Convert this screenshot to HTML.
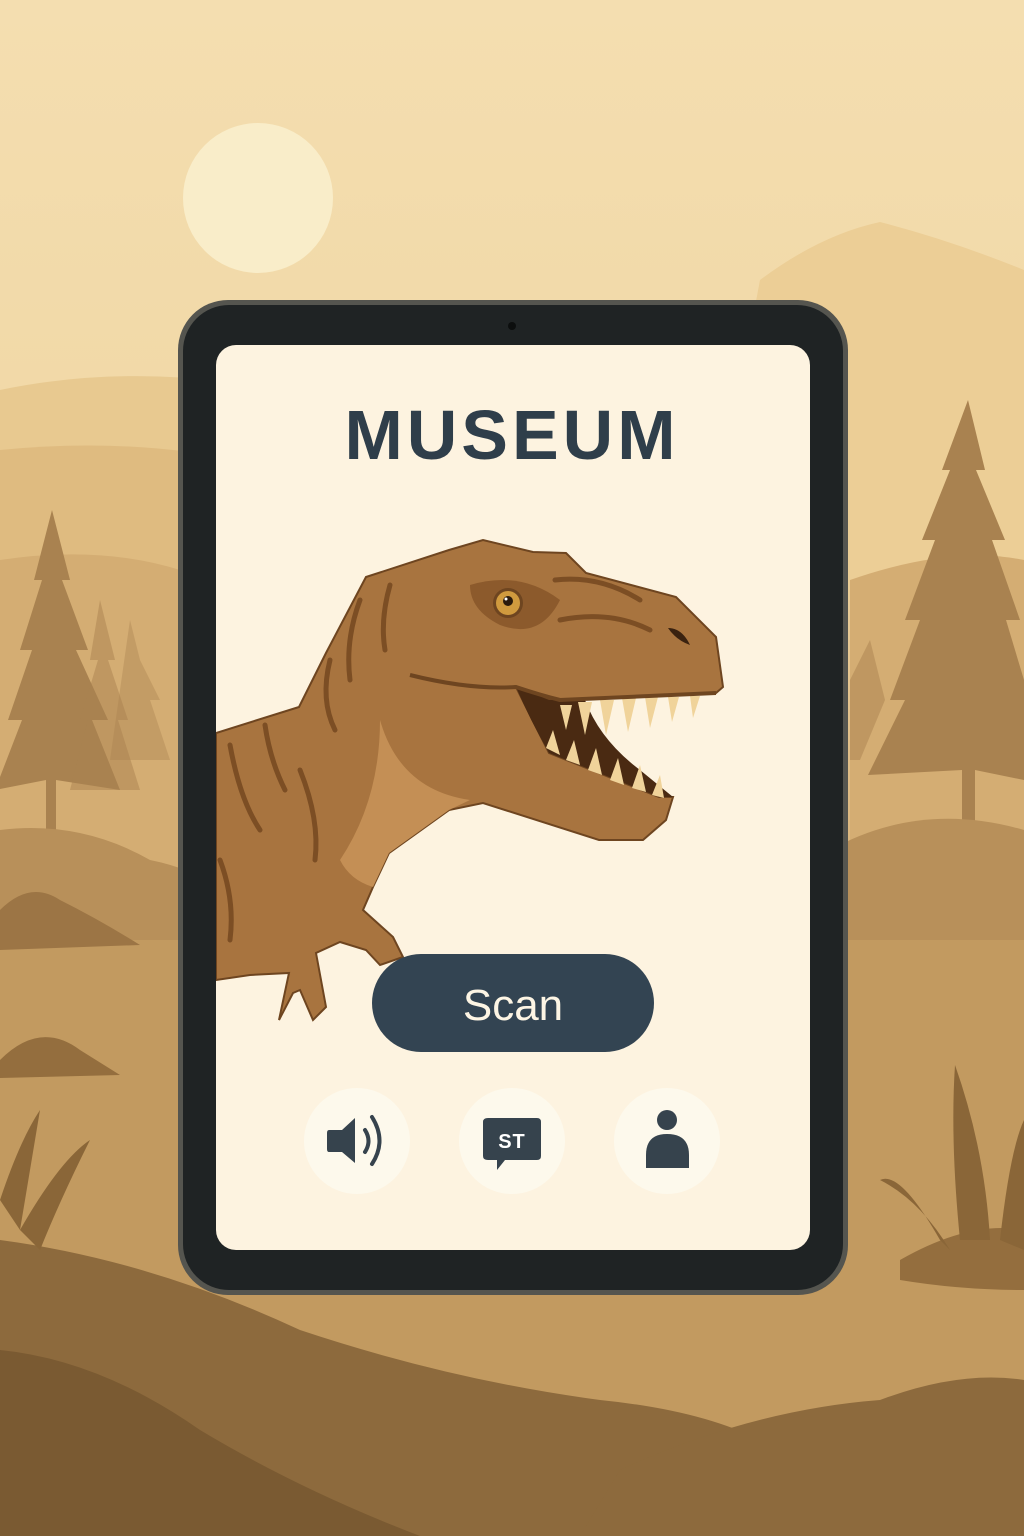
<!DOCTYPE html>
<html><head><meta charset="utf-8"><style>html,body{margin:0;padding:0;width:1024px;height:1536px;overflow:hidden}svg{display:block}</style></head>
<body>
<svg width="1024" height="1536" viewBox="0 0 1024 1536" xmlns="http://www.w3.org/2000/svg">
<defs>
<linearGradient id="sky" x1="0" y1="0" x2="0" y2="1">
<stop offset="0" stop-color="#f4deb0"/><stop offset="0.3" stop-color="#f1d8a6"/><stop offset="0.55" stop-color="#dcb77f"/><stop offset="1" stop-color="#b08552"/>
</linearGradient>
<clipPath id="scr"><rect x="216" y="345" width="594" height="905" rx="20"/></clipPath>
</defs>
<rect width="1024" height="1536" fill="url(#sky)"/>
<circle cx="258" cy="198" r="75" fill="#f9edc9"/>
<path d="M760 280 Q820 235 880 222 Q950 240 1024 270 L1024 600 L700 600Z" fill="#ecce96"/>
<path d="M0 390 Q120 365 250 385 Q400 365 520 400 L520 600 L0 600Z" fill="#e8c990"/>
<path d="M0 450 Q150 435 280 470 L280 700 L0 700Z" fill="#dfbb80"/>
<path d="M0 560 Q100 545 180 570 L180 900 L0 900Z" fill="#d4ad73"/>
<path d="M850 580 Q950 545 1024 560 L1024 900 L850 900Z" fill="#d4ad73"/>
<g fill="#a98250">
<path d="M52 510 L70 580 L62 580 L88 650 L76 650 L108 720 L92 720 L120 790 L56 780 L56 850 L46 850 L46 780 L-5 790 L22 720 L8 720 L32 650 L20 650 L42 580 L34 580Z"/>
<path d="M100 600 L115 660 L108 660 L128 720 L118 720 L140 790 L70 790 L88 720 L80 720 L98 660 L90 660Z" opacity="0.5"/>
<path d="M130 620 L140 660 L160 700 L150 700 L170 760 L110 760 Z" opacity="0.4"/>
</g>
<g fill="#a98250">
<path d="M968 400 L985 470 L976 470 L1005 540 L992 540 L1020 620 L1006 620 L1024 680 L1024 780 L975 770 L975 830 L962 830 L962 770 L868 775 L905 700 L890 700 L920 620 L905 620 L935 540 L922 540 L950 470 L942 470Z"/>
<path d="M870 640 L885 700 L860 760 L850 760 L850 680Z" opacity="0.5"/>
</g>
<path d="M0 830 Q80 820 150 860 Q200 870 240 900 L240 1000 L0 1000Z" fill="#b8905a"/>
<path d="M830 850 Q920 800 1024 830 L1024 960 L830 960Z" fill="#b8905a"/>
<path d="M0 940 L1024 940 L1024 1536 L0 1536Z" fill="#c29a60"/>
<path d="M0 1240 Q150 1260 300 1330 Q450 1380 600 1400 Q700 1410 760 1440 Q650 1470 600 1536 L0 1536Z" fill="#8d6a3d"/>
<path d="M0 1350 Q100 1360 200 1430 Q300 1490 420 1536 L0 1536Z" fill="#7a5a32"/>
<path d="M620 1470 Q750 1410 880 1400 Q960 1370 1024 1380 L1024 1536 L580 1536Z" fill="#8d6a3d"/>
<path d="M0 1060 Q40 1020 80 1050 L120 1075 L0 1078Z" fill="#946e3e"/>
<path d="M900 1260 Q970 1220 1024 1230 L1024 1290 Q960 1290 900 1280Z" fill="#946e3e"/>
<path d="M0 910 Q30 880 60 900 Q100 920 140 945 L0 950Z" fill="#9c7545"/>
<g fill="#8a6638">
<path d="M0 1200 Q20 1140 40 1110 Q30 1170 20 1230Z"/>
<path d="M20 1230 Q60 1160 90 1140 Q60 1200 40 1250Z"/>
<path d="M960 1240 Q950 1140 955 1065 Q985 1150 990 1240Z"/>
<path d="M940 1240 Q900 1170 880 1180 Q920 1200 950 1250Z"/>
<path d="M1000 1240 Q1010 1150 1024 1120 L1024 1250Z"/>
</g>
<rect x="178" y="300" width="670" height="995" rx="50" fill="#55554f"/>
<rect x="183" y="305" width="660" height="985" rx="46" fill="#1f2324"/>
<circle cx="512" cy="326" r="4" fill="#0c0e0e"/>
<rect x="216" y="345" width="594" height="905" rx="20" fill="#fdf3e0"/>
<text x="512" y="459" text-anchor="middle" font-family="Liberation Sans, sans-serif" font-weight="bold" font-size="70" letter-spacing="4" fill="#2f3e4a">MUSEUM</text>
<g clip-path="url(#scr)">
<path d="M216 733 L299 707 L326 653 L366 577 L449 550 L483 540 L533 552 L566 553 L586 573 L676 597 L716 637 L723 687 L716 693 L549 700 L516 687 L549 753 L659 797 L673 797 L666 820 L643 840 L599 840 L483 803 L449 810 L389 853 L373 887 L363 910 L393 937 L403 957 L380 965 L366 950 L340 942 L316 953 L326 1007 L313 1020 L300 990 L293 993 L279 1020 L289 973 L250 975 L216 980Z" fill="#a8743f" stroke="#6e4520" stroke-width="2"/>
<path d="M380 720 Q400 790 470 800 L449 810 L389 853 L373 887 Q350 880 340 860 Q380 800 380 720Z" fill="#c48f55"/>
<path d="M516 687 Q530 720 549 753 L659 797 L673 797 L640 770 Q600 740 585 700 L549 700Z" fill="#4a2a12"/>
<g fill="#f0d39a">
<path d="M560 705 L566 730 L572 705Z M578 702 L585 735 L592 702Z M600 700 L606 735 L614 700Z M622 698 L628 732 L636 698Z M645 697 L650 728 L658 697Z M668 697 L672 722 L679 697Z M690 696 L693 718 L700 696Z"/>
<path d="M546 748 L553 730 L560 755Z M566 760 L574 740 L580 765Z M588 770 L596 748 L602 775Z M610 780 L618 758 L624 785Z M632 788 L640 765 L646 792Z M652 795 L660 775 L664 798Z"/>
</g>
<path d="M410 675 Q470 690 516 687 Q540 695 560 700 L716 693" fill="none" stroke="#6e4520" stroke-width="4"/>
<path d="M470 585 Q520 570 560 600 Q540 640 500 625 Q470 610 470 585Z" fill="#8c5a2c"/>
<circle cx="508" cy="603" r="15" fill="#6e4520"/><circle cx="508" cy="603" r="12" fill="#d09a3e"/><circle cx="508" cy="601" r="5" fill="#2a1a0c"/><circle cx="506" cy="599" r="1.5" fill="#fff"/>
<path d="M668 628 Q682 628 690 645 Q676 640 668 628Z" fill="#3a2210"/>
<g fill="none" stroke="#7c4e24" stroke-width="5" stroke-linecap="round">
<path d="M360 600 Q345 640 350 680"/><path d="M390 585 Q380 620 385 650"/><path d="M330 660 Q320 700 335 730"/>
<path d="M265 725 Q270 760 285 790"/><path d="M230 745 Q240 800 260 830"/><path d="M300 770 Q320 820 315 860"/>
<path d="M220 860 Q235 900 230 940"/><path d="M560 620 Q610 610 650 630"/><path d="M555 580 Q600 575 640 600"/>
</g>
</g>
<rect x="372" y="954" width="282" height="98" rx="49" fill="#334452"/>
<text x="513" y="1020" text-anchor="middle" font-family="Liberation Sans, sans-serif" font-size="44" fill="#fdf5e4">Scan</text>
<circle cx="357" cy="1141" r="53" fill="#fdf9ec"/>
<circle cx="512" cy="1141" r="53" fill="#fdf9ec"/>
<circle cx="667" cy="1141" r="53" fill="#fdf9ec"/>
<path d="M329 1130 L342 1130 L355 1118 L355 1163 L342 1152 L329 1152 Q327 1152 327 1149 L327 1133 Q327 1130 329 1130Z" fill="#36434d"/>
<path d="M365 1130 Q372 1141 365 1152" fill="none" stroke="#36434d" stroke-width="4" stroke-linecap="round"/>
<path d="M372 1117 Q387 1141 372 1164" fill="none" stroke="#36434d" stroke-width="4" stroke-linecap="round"/>
<path d="M488 1118 L537 1118 Q541 1118 541 1122 L541 1156 Q541 1160 537 1160 L505 1160 L497 1170 L497 1160 L488 1160 Q483 1160 483 1156 L483 1122 Q483 1118 488 1118Z" fill="#36434d"/>
<text x="512" y="1148" text-anchor="middle" font-family="Liberation Sans, sans-serif" font-weight="bold" font-size="20" letter-spacing="1" fill="#fff">ST</text>
<circle cx="667" cy="1120" r="10" fill="#36434d"/>
<path d="M646 1168 L646 1155 Q646 1134 667 1134 Q689 1134 689 1155 L689 1168Z" fill="#36434d"/>
</svg>
</body></html>
